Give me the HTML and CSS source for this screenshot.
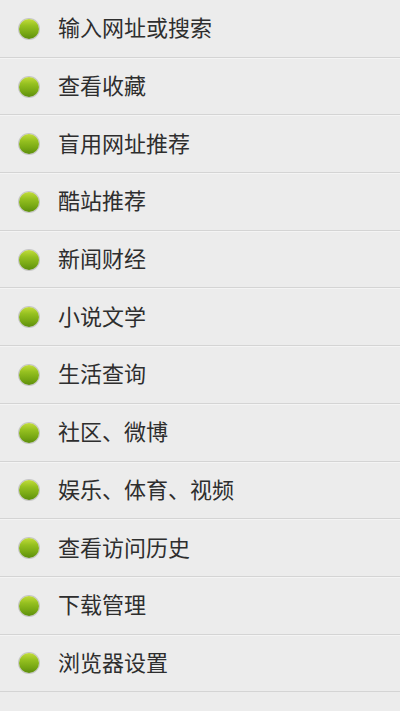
FILE: index.html
```html
<!DOCTYPE html>
<html lang="zh-CN">
<head>
<meta charset="utf-8">
<link rel="stylesheet" href="styles.css">
</head>
<body>
<ul class="menu">
  <li class="item"><span class="dot"></span><span class="label">输入网址或搜索</span></li>
  <li class="item"><span class="dot"></span><span class="label">查看收藏</span></li>
  <li class="item"><span class="dot"></span><span class="label">盲用网址推荐</span></li>
  <li class="item"><span class="dot"></span><span class="label">酷站推荐</span></li>
  <li class="item"><span class="dot"></span><span class="label">新闻财经</span></li>
  <li class="item"><span class="dot"></span><span class="label">小说文学</span></li>
  <li class="item"><span class="dot"></span><span class="label">生活查询</span></li>
  <li class="item"><span class="dot"></span><span class="label">社区、微博</span></li>
  <li class="item"><span class="dot"></span><span class="label">娱乐、体育、视频</span></li>
  <li class="item"><span class="dot"></span><span class="label">查看访问历史</span></li>
  <li class="item"><span class="dot"></span><span class="label">下载管理</span></li>
  <li class="item"><span class="dot"></span><span class="label">浏览器设置</span></li>
</ul>
</body>
</html>
```
FILE: styles.css
```css
html, body {
  margin: 0;
  padding: 0;
  background: #ececec;
}
body {
  font-family: "Noto Sans CJK SC", "Noto Sans", sans-serif;
  color: #2e2e2e;
}
.menu {
  list-style: none;
  margin: 0;
  padding: 0;
}
.item {
  box-sizing: border-box;
  height: 57.7px;
  display: flex;
  align-items: center;
  padding-left: 19px;
  padding-top: 1px;
  border-bottom: 1px solid #d4d4d4;
  box-shadow: 0 1px 0 #f4f4f4;
}
.dot {
  width: 20px;
  height: 20px;
  border-radius: 50%;
  flex: none;
  background: linear-gradient(to bottom, #c2dc3a 0%, #95c020 35%, #78a814 70%, #5d8e0c 100%);
  box-shadow: 0 0 0 1px rgba(110,110,110,0.3);
}
.label {
  margin-left: 19px;
  margin-bottom: 5px;
  font-size: 22px;
  line-height: 1;
}
```
